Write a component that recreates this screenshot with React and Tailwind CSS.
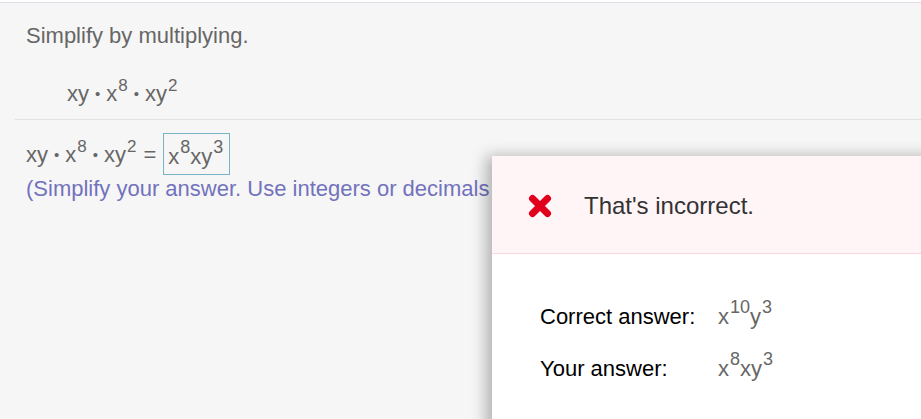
import React from "react";

// small helper for exponent
function Sup({ children, size = "text-[17px]" }) {
  return <sup className={`${size} top-[-0.6em] ml-[1px]`}>{children}</sup>;
}

function Dot() {
  return <span className="mx-[6px] text-[15px] relative top-[-2px]">•</span>;
}

function XIcon() {
  return (
    <svg width="24" height="24" viewBox="0 0 24 24">
      <path d="M4.5 4.5 L19.5 19.5 M19.5 4.5 L4.5 19.5" stroke="#e0001b" strokeWidth="7" strokeLinecap="round" />
    </svg>
  );
}

export default function App() {
  return (
    <div
      className="relative h-screen overflow-hidden bg-white"
      style={{ fontFamily: '"Liberation Sans", Arial, sans-serif' }}
    >
      <div className="mt-[2px] h-full border-t border-[#e1dee9] bg-[#f6f6f6] pl-[15px]">
        {/* question */}
        <div className="pl-[11px] pt-[20px] pb-[10px] border-b border-[#e2e2e2]">
          <div className="text-[22px] leading-[26px] text-[#666]">Simplify by multiplying.</div>
          <div className="mt-[32px] pl-[41px] text-[22px] leading-[26px] text-[#666]">
            xy<Dot />x<Sup>8</Sup>
            <Dot />xy<Sup>2</Sup>
          </div>
        </div>

        {/* answer */}
        <div className="pl-[11px] pt-[13px]">
          <div className="flex items-end text-[22px] leading-[26px] text-[#666]">
            <span className="mb-[5px]">
              xy<Dot />x<Sup>8</Sup>
              <Dot />xy<Sup>2</Sup>
              <span className="mx-[7px]">=</span>
            </span>
            <span className="inline-block border border-[#78b3c4] pl-[4px] pr-[6px] pt-[10px] pb-[4px]">
              x<Sup size="text-[18px]">8</Sup>xy<Sup size="text-[18px]">3</Sup>
            </span>
          </div>
          <div className="mt-[1px] text-[22px] leading-[26px] text-[#7272bd] whitespace-nowrap">
            (Simplify your answer. Use integers or decimals for any numbers in the expression.)
          </div>
        </div>
      </div>

      {/* feedback popup */}
      <div className="absolute left-[492px] top-[156px] w-[460px] h-[320px] bg-white shadow-[-6px_0_14px_rgba(0,0,0,0.28)]">
        <div className="flex items-center h-[98px] bg-[#fff5f6] border-b border-[#fcd7dd] pl-[36px] pt-[2px]">
          <XIcon />
          <span className="ml-[32px] text-[24px] text-[#333]">That's incorrect.</span>
        </div>
        <div className="pl-[48px] pt-[46px] text-[22px] text-black">
          <div className="flex items-center h-[32px]">
            <span className="w-[178px]">Correct answer:</span>
            <span className="text-[#666] text-[22px]">
              x<Sup size="text-[18px]">10</Sup>y<Sup size="text-[18px]">3</Sup>
            </span>
          </div>
          <div className="flex items-center h-[32px] mt-[20px]">
            <span className="w-[178px]">Your answer:</span>
            <span className="text-[#666] text-[22px]">
              x<Sup size="text-[18px]">8</Sup>xy<Sup size="text-[18px]">3</Sup>
            </span>
          </div>
        </div>
      </div>
    </div>
  );
}
